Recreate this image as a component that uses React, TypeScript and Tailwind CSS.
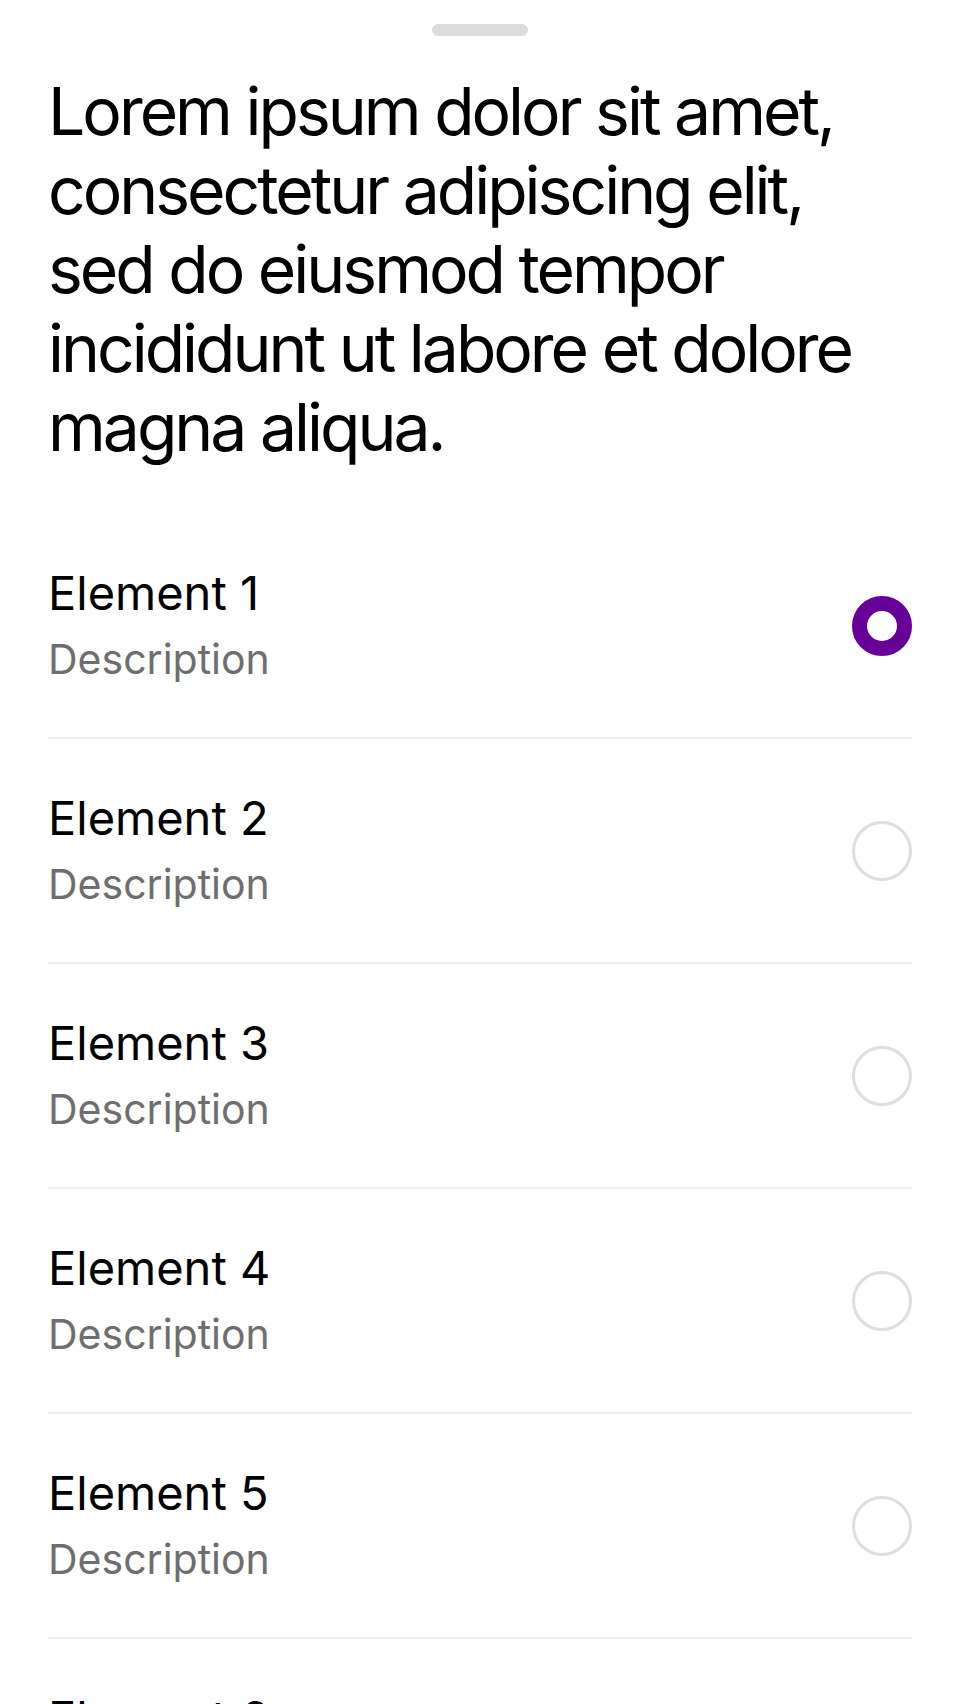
import React from "react";

const items = [1, 2, 3, 4, 5, 6];

export default function App() {
  return (
    <div className="w-[960px] h-[1704px] overflow-hidden bg-white font-['Inter',sans-serif] px-12">
      <div className="flex justify-center pt-6">
        <div className="w-24 h-3 rounded-full bg-[#dcdcdc]" />
      </div>
      <h1 className="mt-9 text-[66px] leading-[79px] tracking-[-3px] font-normal text-black">
        Lorem ipsum dolor sit amet, consectetur adipiscing elit, sed do eiusmod tempor incididunt ut labore et dolore magna aliqua.
      </h1>
      <div className="mt-[47px] flex flex-col">
        {items.map((n) => (
          <div key={n} className="h-[225px] shrink-0 flex items-center justify-between border-b-2 border-[#eeeeee]">
            <div className="flex flex-col">
              <span className="text-[47px] leading-[67px] text-black">Element {n}</span>
              <span className="text-[41px] leading-[67px] text-[#6e6e6e]">Description</span>
            </div>
            {n === 1 ? (
              <div className="w-[60px] h-[60px] rounded-full border-[15px] border-[#660099] bg-white" />
            ) : (
              <div className="w-[60px] h-[60px] rounded-full border-[3px] border-[#dedede] bg-white" />
            )}
          </div>
        ))}
      </div>
    </div>
  );
}
